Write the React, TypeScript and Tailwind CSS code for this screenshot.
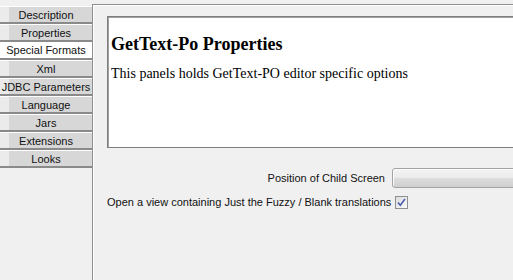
const tabs = [
  "Description",
  "Properties",
  "Special Formats",
  "Xml",
  "JDBC Parameters",
  "Language",
  "Jars",
  "Extensions",
  "Looks",
];

const uiFont = { fontFamily: '"Liberation Sans", Arial, sans-serif' };
const serif = { fontFamily: '"Liberation Serif", "Times New Roman", serif' };

export default function App() {
  const selected = "Special Formats";

  return (
    <div
      className="w-[513px] h-[280px] bg-[#f0f0f0] flex overflow-hidden text-[11px] text-[#111]"
      style={uiFont}
    >
      {/* Tab column */}
      <div className="w-[92px] shrink-0 pt-[6px] flex flex-col">
        {tabs.map((t) =>
          t === selected ? (
            <div
              key={t}
              className="h-[18px] bg-white border-b-2 border-[#8a8a8a] flex items-center justify-center leading-none pt-[1px]"
            >
              {t}
            </div>
          ) : (
            <div
              key={t}
              className="h-[18px] border-t border-white border-b-2 border-b-[#8a8a8a] bg-[linear-gradient(to_right,#ebebeb_9px,#d7d7d7_9px)] flex items-center justify-center leading-none pt-[1px]"
            >
              {t}
            </div>
          )
        )}
      </div>

      {/* Content */}
      <div className="flex-1 mt-[4px] border-t border-l border-[#8e8e8e] shadow-[inset_1px_1px_0_#ffffff] pl-[14px] pt-[11px]">
        <div className="w-[440px] h-[132px] bg-white border border-[#7f7f7f] shadow-[inset_1px_1px_0_#a0a0a0] pl-[3px] pt-[17px]">
          <div className="text-[18px] leading-[21px] font-bold text-black" style={serif}>
            GetText-Po Properties
          </div>
          <div className="mt-[11px] text-[14px] leading-[16px] text-black" style={serif}>
            This panels holds GetText-PO editor specific options
          </div>
        </div>

        <div className="mt-[20px] grid grid-cols-[278px_1fr] gap-x-[7px] gap-y-[6px] items-center">
          <div className="text-right whitespace-nowrap">Position of Child Screen</div>
          <div className="h-[20px] w-[140px] rounded-l-[3px] border border-[#a3a3a3] bg-[linear-gradient(to_bottom,#f3f3f3_0%,#ebebeb_50%,#dddddd_50%,#cfcfcf_100%)] shadow-[inset_1px_1px_0_#fcfcfc]" />

          <div className="text-right whitespace-nowrap">
            Open a view containing Just the Fuzzy / Blank translations
          </div>
          <div className="pl-[3px] flex items-center">
            <div className="w-[13px] h-[13px] border border-[#8e8f8f] bg-[linear-gradient(to_bottom_right,#dcdcdc,#fbfbfb)] flex items-center justify-center">
              <svg width="11" height="11" viewBox="0 0 11 11">
                <path
                  d="M2 5.5 L4.3 8.2 L9 2"
                  fill="none"
                  stroke="#4a5cae"
                  strokeWidth="1.6"
                />
              </svg>
            </div>
          </div>
        </div>
      </div>
    </div>
  );
}
